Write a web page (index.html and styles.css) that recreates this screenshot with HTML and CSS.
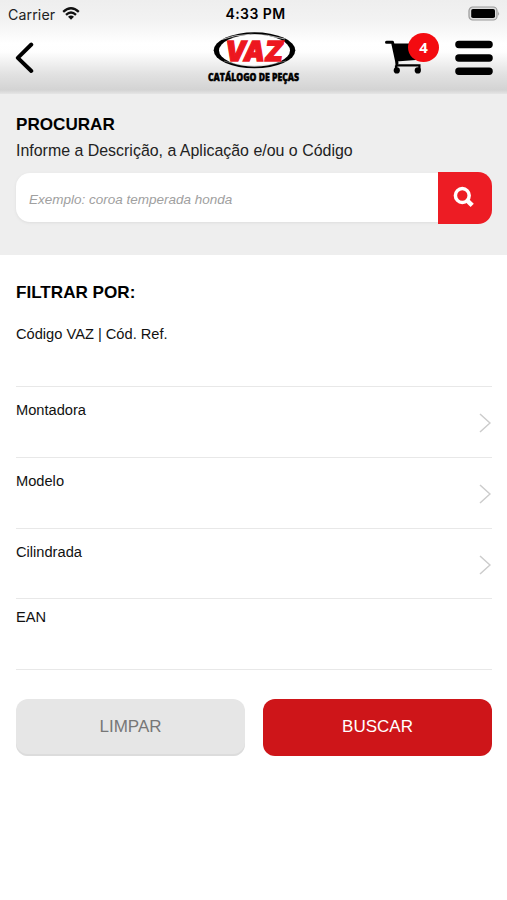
FILE: index.html
```html
<!DOCTYPE html>
<html lang="pt-BR">
<head>
<meta charset="utf-8">
<meta name="viewport" content="width=device-width, initial-scale=1">
<title>VAZ - Catálogo de Peças</title>
<link rel="stylesheet" href="styles.css">
</head>
<body>
<header class="header">
  <div class="status">
    <div class="status-left">
      <span class="carrier">Carrier</span>
      <svg class="wifi" viewBox="0 0 18 13" width="18" height="13">
        <path d="M1.2 4.8Q9-2.2 16.8 4.8M4 7.8Q9 3.3 14 7.8" fill="none" stroke="#111" stroke-width="2.3"/>
        <path d="M6 9.7Q9 7.3 12 9.7L9 12.8Z" fill="#111"/>
      </svg>
    </div>
    <span class="time">4:33 PM</span>
    <svg class="battery" viewBox="0 0 33 15" width="33" height="15">
      <rect x="1" y="1" width="28" height="13" rx="3.8" fill="#ddd" stroke="#999" stroke-width="1.2"/>
      <rect x="3.2" y="3" width="23.8" height="9" rx="1.8" fill="#000"/>
      <path d="M30.2 5.2Q32 7.5 30.2 9.8Z" fill="#999"/>
    </svg>
  </div>
  <nav class="nav">
    <button class="nav-button back" aria-label="Voltar">
      <svg viewBox="0 0 20 32" width="20" height="32"><path d="M16.3 2.5 2.8 15.8 16.3 29" fill="none" stroke="#000" stroke-width="3.9" stroke-linecap="round" stroke-linejoin="round"/></svg>
    </button>
    <svg class="logo" viewBox="0 0 96 54" width="96" height="54">
      <ellipse cx="48.5" cy="18.3" rx="40.8" ry="18" fill="#000"/>
      <ellipse cx="48.5" cy="18.5" rx="35.5" ry="16" fill="#fff"/>
      <path d="M14 8Q43-3 79 7" fill="none" stroke="#fff" stroke-width=".7"/>
      <path d="M18 29Q47 39 80 29" fill="none" stroke="#bbb" stroke-width=".5"/>
      <text class="logo-name" x="19" y="28.8" textLength="58" lengthAdjust="spacingAndGlyphs">VAZ</text>
      <text class="logo-caption" x="2" y="49" textLength="91" lengthAdjust="spacingAndGlyphs">CATÁLOGO DE PEÇAS</text>
    </svg>
    <div class="nav-right">
      <button class="nav-button cart" aria-label="Carrinho">
        <svg viewBox="0 0 38 36" width="38" height="36">
          <path d="M1.5 3.2H7.5L12 24" fill="none" stroke="#000" stroke-width="3" stroke-linecap="round" stroke-linejoin="round"/>
          <path d="M8.5 4.5H37L34 20.7 11.3 22.4Z" fill="#000"/>
          <path d="M12 22 11 30M10.5 26.4H34.4V31M11 26.4V31" fill="none" stroke="#000" stroke-width="2.2"/>
          <circle cx="11.8" cy="31.4" r="3.1"/><circle cx="32.8" cy="31.4" r="3.1"/>
        </svg>
        <span class="badge">4</span>
      </button>
      <button class="nav-button menu" aria-label="Menu">
        <svg viewBox="0 0 38 36" width="38" height="36"><path d="M3.9 4.5H34.1M3.9 18H34.1M3.9 31.3H34.1" stroke="#000" stroke-width="7.4" stroke-linecap="round"/></svg>
      </button>
    </div>
  </nav>
</header>
<main>
  <section class="search">
    <h1 class="title">PROCURAR</h1>
    <p class="hint">Informe a Descrição, a Aplicação e/ou o Código</p>
    <div class="search-box">
      <div class="search-input">Exemplo: coroa temperada honda</div>
      <button class="search-button" aria-label="Procurar">
        <svg viewBox="0 0 22 22" width="22" height="22"><circle cx="9.3" cy="9.5" r="6.9" fill="none" stroke="#fff" stroke-width="3.5"/><path d="m14 14.3 5.2 5" stroke="#fff" stroke-width="4.6"/></svg>
      </button>
    </div>
  </section>
  <section class="filters">
    <h2 class="title">FILTRAR POR:</h2>
    <div class="row row-code"><span>Código VAZ | Cód. Ref.</span></div>
    <div class="row row-select"><span>Montadora</span><svg class="chevron" viewBox="0 0 12 20" width="12" height="20"><path d="m1 1 10 9-10 9"/></svg></div>
    <div class="row row-select"><span>Modelo</span><svg class="chevron" viewBox="0 0 12 20" width="12" height="20"><path d="m1 1 10 9-10 9"/></svg></div>
    <div class="row row-select"><span>Cilindrada</span><svg class="chevron" viewBox="0 0 12 20" width="12" height="20"><path d="m1 1 10 9-10 9"/></svg></div>
    <div class="row row-ean"><span>EAN</span></div>
    <div class="actions">
      <button class="action clear">LIMPAR</button>
      <button class="action submit">BUSCAR</button>
    </div>
  </section>
</main>
</body>
</html>
```

FILE: styles.css
```css
* { box-sizing: border-box; }
body {
  margin: 0;
  min-height: 900px;
  background: #fff;
  color: #000;
  font-family: "Liberation Sans", Arial, sans-serif;
}
button { border: 0; padding: 0; font: inherit; background: none; }
svg { display: block; }
.header {
  height: 94px;
  background: linear-gradient(#eee 0, #f2f2f2 20px, #fff 44px, #fefefe 52px, #e2e2e2 74px, #d3d3d3 90px, #e5e5e5 94px);
}
.status {
  height: 28px;
  padding: 0 7px 0 8px;
  display: grid;
  grid-template-columns: 1fr auto 1fr;
  align-items: center;
  font-family: Inter, sans-serif;
}
.status-left { display: flex; align-items: center; gap: 7px; }
.carrier { font-size: 14.2px; color: #222; letter-spacing: .1px; }
.time { font-size: 14px; font-weight: 600; letter-spacing: .45px; margin: -1px -3px 0 0; }
.battery { justify-self: end; margin: -1px -1px 0 0; }
.wifi { margin-top: -2px; }
.nav {
  height: 66px;
  padding: 4px 14px 0 15px;
  display: grid;
  grid-template-columns: 1fr auto 1fr;
  align-items: start;
}
.back { justify-self: start; margin-top: 10px; }
.logo { overflow: visible; margin-right: 1px; }
.logo-name { font: italic 900 27.5px Inter, sans-serif; fill: #ed171f; stroke: #ed171f; stroke-width: 1.3px; }
.logo-caption { font: 800 10.5px "Open Sans", sans-serif; stroke: #000; stroke-width: .5px; }
.nav-right { justify-self: end; display: flex; gap: 32px; }
.cart { position: relative; margin-top: 6px; }
.badge {
  position: absolute;
  left: 23px;
  top: -5px;
  width: 31px;
  height: 29px;
  border-radius: 50%;
  background: #f40b10;
  color: #fff;
  font: bold 15px/29px "Open Sans", sans-serif;
  text-align: center;
}
.menu { margin-top: 8px; }
.search { height: 161px; padding: 20px 15px 0 16px; background: #eee; }
.title { margin: 0; font-size: 17.1px; line-height: 21px; font-weight: bold; }
.hint { margin: 6px 0 0; font-size: 15.95px; line-height: 20px; color: #222; white-space: nowrap; }
.search-box { display: flex; align-items: center; margin-top: 11px; }
.search-input {
  flex: 1;
  height: 49px;
  margin-top: -1px;
  padding: 0 13px;
  border-radius: 14px 0 0 14px;
  background: #fff;
  box-shadow: 0 1px 3px #ddd;
  color: #a0a0a0;
  font-size: 13.5px;
  font-style: italic;
  line-height: 53px;
}
.search-button {
  width: 54px;
  height: 51.5px;
  display: grid;
  place-items: center;
  border-radius: 0 14px 14px 0;
  background: #ed1c24;
}
.search-button svg { margin: -2px 0 0 -3px; }
.filters { padding: 27px 15px 0 16px; }
.row {
  display: flex;
  justify-content: space-between;
  border-bottom: 1px solid #e8e8e8;
  color: #111;
  font-size: 14.65px;
  line-height: 18px;
}
.row-code { height: 84px; padding-top: 22px; }
.row-select { height: 70.8px; padding-top: 14px; }
.row-ean { height: 70.6px; padding-top: 9px; }
.chevron { margin: 12px 1px 0 0; fill: none; stroke: #ccc; stroke-width: 1.5; }
.actions { display: grid; grid-template-columns: 1fr 1fr; gap: 18px; margin-top: 29px; }
.action { height: 57px; border-radius: 12px; font-size: 17px; }
.clear { background: #e6e6e6; color: #777; box-shadow: inset 0 -2px 0 #dcdcdc; }
.submit { background: #ce1519; color: #fff; }
```
